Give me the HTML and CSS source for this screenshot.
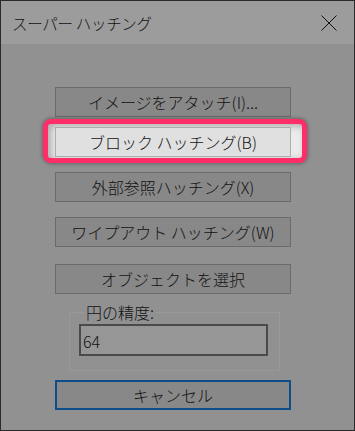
FILE: index.html
```html
<!DOCTYPE html>
<html lang="ja">

<head>
  <meta charset="UTF-8">
  <meta name="viewport" content="width=device-width, initial-scale=1.0">
  <title>スーパー ハッチング</title>
  <link rel="stylesheet" href="styles.css">
</head>

<body>
  <main class="window">
    <header class="titlebar">
      <h1 class="title">スーパー ハッチング</h1>
      <button class="close" aria-label="閉じる">
        <svg width="16" height="16" viewBox="0 0 16 16">
          <path d="M0.5 0.5 L15.5 15.5 M15.5 0.5 L0.5 15.5" stroke="#111" stroke-width="1" fill="none" />
        </svg>
      </button>
    </header>

    <section class="content">
      <button class="btn btn-attach">イメージをアタッチ(I)...</button>

      <div class="spotlight">
        <button class="btn btn-lit">ブロック ハッチング(B)</button>
      </div>

      <button class="btn btn-xref">外部参照ハッチング(X)</button>
      <button class="btn btn-wipeout">ワイプアウト ハッチング(W)</button>
      <button class="btn btn-select">オブジェクトを選択</button>

      <fieldset class="group">
        <legend class="group-label">円の精度:</legend>
        <input class="field" type="text" value="64">
      </fieldset>

      <button class="btn btn-cancel">キャンセル</button>
    </section>
  </main>
</body>

</html>
```

FILE: styles.css
```css
*,
*::before,
*::after {
  box-sizing: border-box;
  margin: 0;
  padding: 0;
}

:root {
  /* COLORS (dimmed dialog) */
  --title-bg: hsl(0, 0%, 61%);
  --body-bg: hsl(0, 0%, 57%);
  --btn-bg: hsl(0, 0%, 53.5%);
  --btn-border: hsl(0, 0%, 42%);
  --text: hsl(0, 0%, 7%);
  --frame: hsl(0, 0%, 60%);
  --field-bg: hsl(0, 0%, 59%);
  --field-border: hsl(0, 0%, 29%);
  --focus-blue: hsl(208, 85%, 29%);

  --lit-bg: hsl(0, 0%, 88%);
  --lit-border: hsl(0, 0%, 68%);
  --pink: hsl(343, 100%, 59%);

  /* FONTS */
  --ff-ui: "Noto Sans CJK JP", "Noto Sans", sans-serif;
}

body {
  background-color: var(--body-bg);
  font-family: var(--ff-ui);
  font-weight: 300;
  color: var(--text);
}

.window {
  display: flex;
  flex-direction: column;

  width: 355px;
  height: 431px;

  border: 1px solid hsl(0, 0%, 17%);
  background-color: var(--body-bg);
}

.titlebar {
  display: flex;
  align-items: center;
  justify-content: space-between;

  height: 43px;
  padding-inline: 11px 17px;

  background-color: var(--title-bg);
}

.title {
  font-size: 15.5px;
  font-weight: 300;
  line-height: 1;
  letter-spacing: -0.3px;
  margin-top: 3px;
}

.close {
  display: grid;
  place-items: center;

  margin-top: 1px;
  border: none;
  background: none;
}

.close svg {
  display: block;
}

.content {
  display: flex;
  flex-direction: column;
  align-items: flex-start;

  padding-top: 43px;
  padding-left: 54px;
}

.btn {
  width: 236px;
  height: 30px;

  border: 1px solid var(--btn-border);
  background-color: var(--btn-bg);
  color: var(--text);

  font-family: var(--ff-ui);
  font-size: 16px;
  font-weight: 300;
  line-height: 1;
}

.spotlight {
  position: relative;
  margin-top: 10px;
}

/* hand drawn highlight round the block button */
.spotlight::before {
  content: "";
  position: absolute;
  inset: -8px -16px -6px -12px;

  border: 5px solid var(--pink);
  border-radius: 8px;
  background-color: hsl(0, 0%, 92%);
  box-shadow: 0 0 4px rgba(0, 0, 0, 0.45), inset 3px 2px 7px rgba(0, 0, 0, 0.28);
}

.btn-lit {
  position: relative;
  border-color: var(--lit-border);
  background-color: var(--lit-bg);
}

.btn-xref {
  margin-top: 15px;
}

.btn-wipeout {
  margin-top: 15px;
}

.btn-select {
  margin-top: 17px;
}

.group {
  width: 211px;
  margin-top: 8px;
  margin-left: 14px;
  padding: 2px 0 14px 9px;

  border: 1px solid var(--frame);
}

.group-label {
  margin-left: 5px;
  padding-inline: 2px;

  font-size: 16px;
  line-height: 20px;
}

.field {
  display: block;

  width: 189px;
  height: 32px;
  padding: 2px 0 0 2px;

  border: 2px solid var(--field-border);
  background-color: var(--field-bg);
  color: var(--text);

  font-family: var(--ff-ui);
  font-size: 16px;
  font-weight: 300;
  line-height: 1;
  vertical-align: top;
}

.btn-cancel {
  margin-top: 9px;
  border: 2px solid var(--focus-blue);
}
```
